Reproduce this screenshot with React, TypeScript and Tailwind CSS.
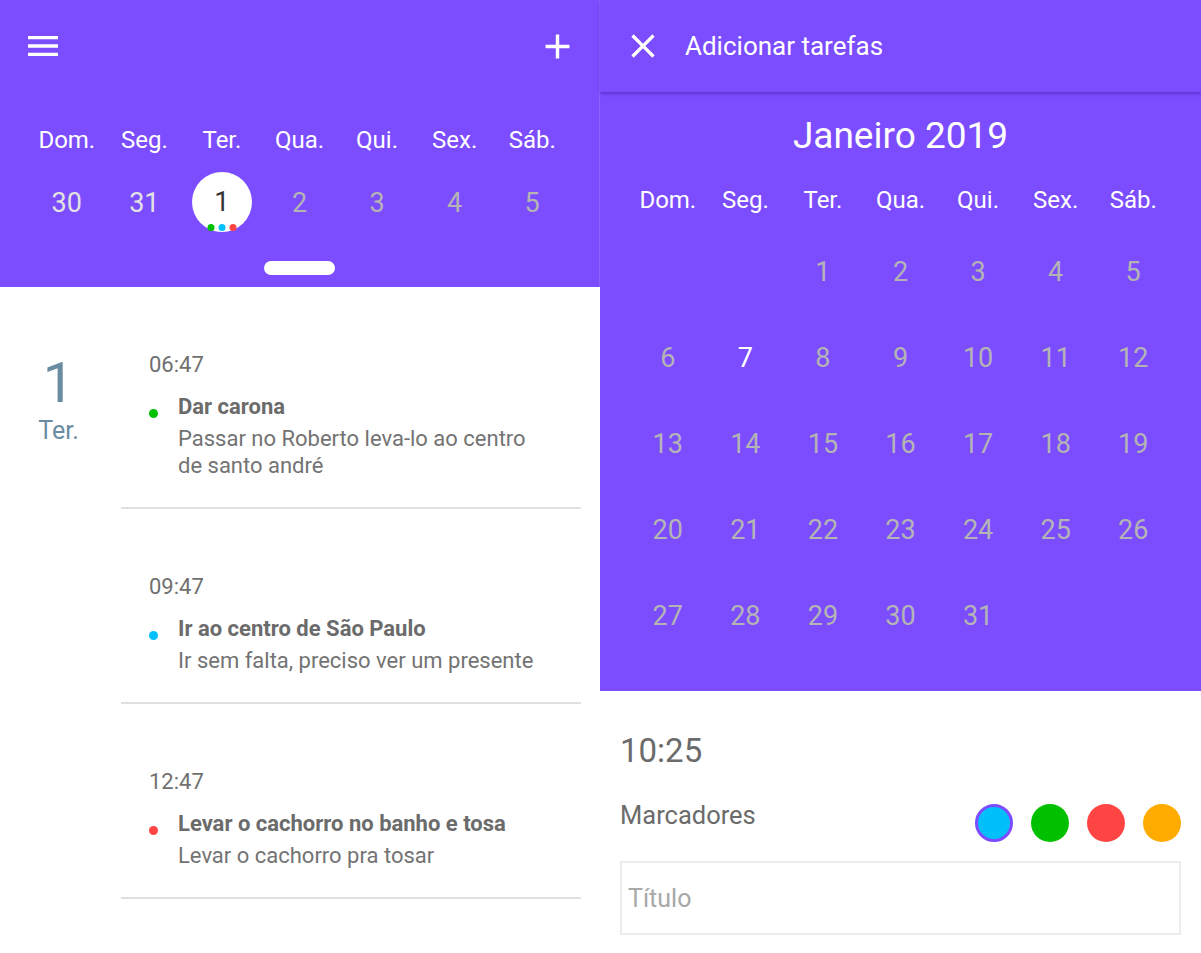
import React from "react";

const purple = "bg-[#7c4dff]";
const weekDays = ["Dom.", "Seg.", "Ter.", "Qua.", "Qui.", "Sex.", "Sáb."];

function MenuIcon() {
  return (
    <svg width="40" height="40" viewBox="0 0 24 24" fill="white">
      <path d="M3 18h18v-2H3v2zm0-5h18v-2H3v2zm0-7v2h18V6H3z" />
    </svg>
  );
}

function PlusIcon() {
  return (
    <svg width="41" height="41" viewBox="0 0 24 24" fill="white">
      <path d="M19 13h-6v6h-2v-6H5v-2h6V5h2v6h6v2z" />
    </svg>
  );
}

function CloseIcon() {
  return (
    <svg width="40" height="40" viewBox="0 0 24 24" fill="white">
      <path d="M19 6.41L17.59 5 12 10.59 6.41 5 5 6.41 10.59 12 5 17.59 6.41 19 12 13.41 17.59 19 19 17.59 13.41 12z" />
    </svg>
  );
}

interface Task {
  time: string;
  title: string;
  desc: string[];
  dot: string;
}

const tasks: Task[] = [
  {
    time: "06:47",
    title: "Dar carona",
    desc: ["Passar no Roberto leva-lo ao centro", "de santo andré"],
    dot: "bg-[#00c000]",
  },
  {
    time: "09:47",
    title: "Ir ao centro de São Paulo",
    desc: ["Ir sem falta, preciso ver um presente"],
    dot: "bg-[#00bfff]",
  },
  {
    time: "12:47",
    title: "Levar o cachorro no banho e tosa",
    desc: ["Levar o cachorro pra tosar"],
    dot: "bg-[#ff4444]",
  },
];

function WeekView() {
  return (
    <div className="w-[600px] flex flex-col">
      <div className={`${purple} h-[287px] flex flex-col border-r border-[#8c63ff]`}>
        <div className="h-[92px] flex items-center justify-between pl-[23px] pr-[21px]">
          <MenuIcon />
          <PlusIcon />
        </div>
        <div className="grid grid-cols-7 mx-[28px] mt-[33px] h-[30px] leading-[30px] text-[24px] text-white text-center">
          {weekDays.map((d) => (
            <span key={d}>{d}</span>
          ))}
        </div>
        <div className="grid grid-cols-7 mx-[28px] mt-[17px] h-[60px] items-center text-center text-[27px]">
          <span className="text-[#e2e2e2] pt-[3px]">30</span>
          <span className="text-[#e2e2e2] pt-[3px]">31</span>
          <div className="flex justify-center">
            <div className="relative w-[60px] h-[60px] rounded-full bg-white flex items-center justify-center text-[#333]">
              1
              <div className="absolute bottom-[1px] left-1/2 -translate-x-1/2 flex gap-[4px]">
                <span className="w-[7px] h-[7px] rounded-full bg-[#00c000]" />
                <span className="w-[7px] h-[7px] rounded-full bg-[#00bfff]" />
                <span className="w-[7px] h-[7px] rounded-full bg-[#ff4444]" />
              </div>
            </div>
          </div>
          <span className="text-[#b4b4b4] pt-[3px]">2</span>
          <span className="text-[#b4b4b4] pt-[3px]">3</span>
          <span className="text-[#b4b4b4] pt-[3px]">4</span>
          <span className="text-[#b4b4b4] pt-[3px]">5</span>
        </div>
        <div className="mt-[29px] mx-auto w-[71px] h-[14px] rounded-full bg-white" />
      </div>

      <div className="flex flex-1 bg-white">
        <div className="w-[121px] pt-[68px] flex flex-col items-center pr-[4px] text-[#6a8ca3]">
          <span className="text-[56px] leading-none">1</span>
          <span className="text-[25px] leading-[30px] mt-[5px]">Ter.</span>
        </div>
        <div className="flex-1 mr-[19px]">
          {tasks.map((t) => (
            <div key={t.time} className="pl-[28px] pt-[64px] pb-[28px] border-b-2 border-[#e0e0e0]">
              <div className="text-[22px] leading-[28px] text-[#707070]">{t.time}</div>
              <div className="flex mt-[14px]">
                <span className={`w-[9px] h-[9px] rounded-full mt-[16px] ${t.dot}`} />
                <div className="ml-[20px]">
                  <div className="text-[22px] leading-[28px] font-bold text-[#6b6b6b]">{t.title}</div>
                  <div className="mt-[4px] text-[22px] leading-[27px] text-[#737373]">
                    {t.desc.map((l) => (
                      <div key={l}>{l}</div>
                    ))}
                  </div>
                </div>
              </div>
            </div>
          ))}
        </div>
      </div>
    </div>
  );
}

function MonthView() {
  const cells: (number | null)[] = [null, null];
  for (let i = 1; i <= 31; i++) cells.push(i);

  return (
    <div className="w-[601px] flex flex-col">
      <div className={`${purple} h-[691px] flex flex-col`}>
        <div className="relative z-10 h-[92px] flex items-center pl-[23px] shadow-[0_2px_3px_rgba(40,0,120,0.35)]">
          <CloseIcon />
          <span className="ml-[22px] text-[26px] text-white pt-[1px]">Adicionar tarefas</span>
        </div>
        <div className="mt-[24px] h-[40px] leading-[40px] text-center text-[37px] text-white">Janeiro 2019</div>
        <div className="grid grid-cols-7 mx-[29px] mt-[29px] h-[30px] leading-[30px] text-[24px] text-white text-center">
          {weekDays.map((d) => (
            <span key={d}>{d}</span>
          ))}
        </div>
        <div className="grid grid-cols-7 mx-[29px] mt-[14px] auto-rows-[86px] items-center text-center text-[27px]">
          {cells.map((c, i) => (
            <span key={i} className={c === 7 ? "text-white" : "text-[#b4b4b4]"}>
              {c ?? ""}
            </span>
          ))}
        </div>
      </div>

      <div className="flex-1 bg-white px-[20px] pt-[42px]">
        <div className="text-[33px] leading-[36px] text-[#6b6b6b]">10:25</div>
        <div className="mt-[32px] flex items-center justify-between">
          <span className="text-[25.5px] leading-[28px] pb-[16px] text-[#6b6b6b]">Marcadores</span>
          <div className="flex gap-[18px]">
            <span className="w-[38px] h-[38px] rounded-full bg-[#00bff9] border-[3px] border-[#7c4dff]" />
            <span className="w-[38px] h-[38px] rounded-full bg-[#00c000]" />
            <span className="w-[38px] h-[38px] rounded-full bg-[#ff4444]" />
            <span className="w-[38px] h-[38px] rounded-full bg-[#ffab00]" />
          </div>
        </div>
        <div className="mt-[16px] h-[74px] border-2 border-[#ececec] flex items-center pl-[6px]">
          <span className="text-[25px] text-[#a8a8a8] pt-[2px]">Título</span>
        </div>
      </div>
    </div>
  );
}

export default function App() {
  return (
    <div className="w-[1201px] h-[953px] flex bg-white font-['Roboto',sans-serif] overflow-hidden">
      <WeekView />
      <MonthView />
    </div>
  );
}
